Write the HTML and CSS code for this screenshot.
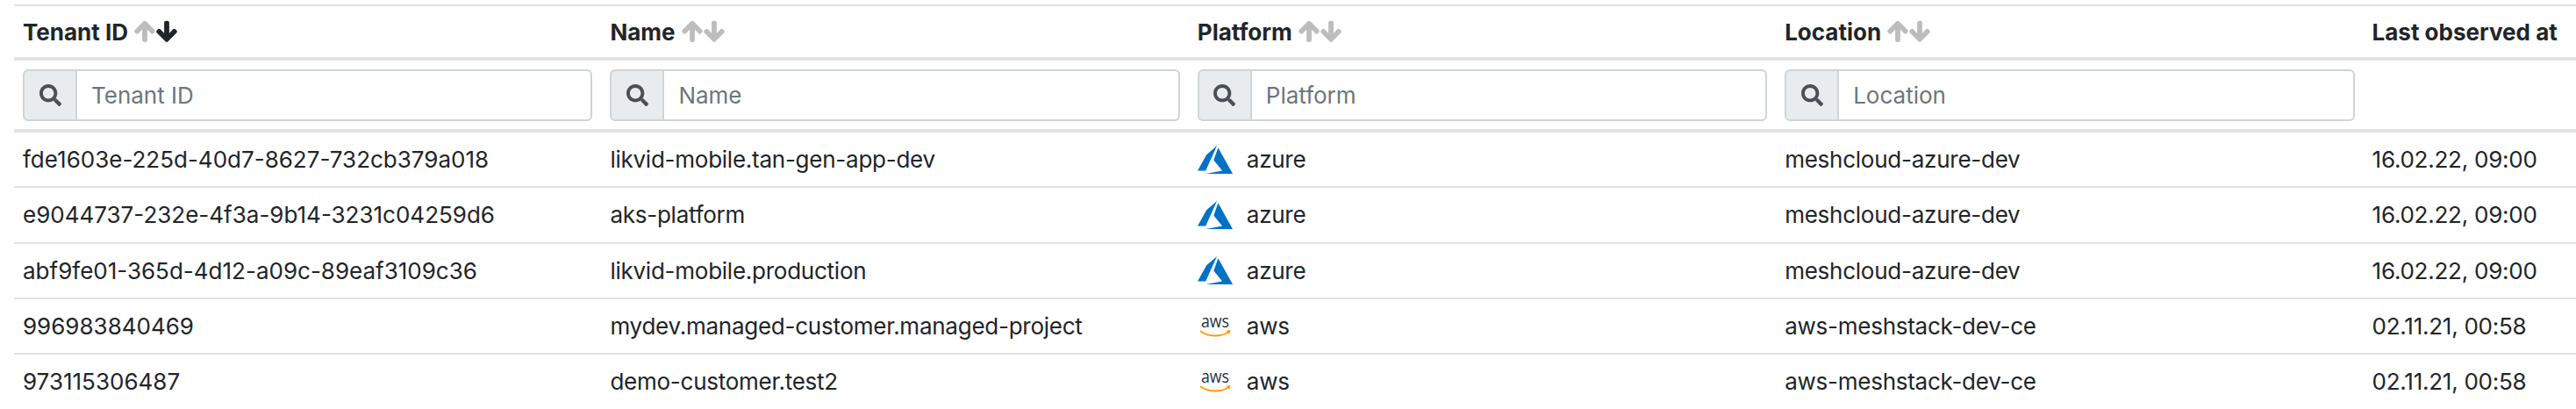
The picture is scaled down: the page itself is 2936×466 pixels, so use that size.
FILE: index.html
```html
<!DOCTYPE html>
<html lang="en">
<head>
<meta charset="utf-8">
<title>Tenants</title>
<link rel="stylesheet" href="styles.css">
</head>
<body>
<svg class="defs" width="0" height="0" aria-hidden="true">
  <symbol id="up" viewBox="-16 0 480 512"><path d="M34.9 289.5l-22.2-22.2c-9.4-9.4-9.4-24.6 0-33.9L207 39c9.4-9.4 24.6-9.4 33.9 0l194.3 194.3c9.4 9.4 9.4 24.6 0 33.9L413 289.4c-9.5 9.5-25 9.3-34.3-.4L264 168.6V456c0 13.3-10.7 24-24 24h-32c-13.3 0-24-10.7-24-24V168.6L69.2 289.1c-9.3 9.8-24.8 10-34.3.4z"/></symbol>
  <symbol id="down" viewBox="-16 0 480 512"><path d="M413.1 222.5l22.2 22.2c9.4 9.4 9.4 24.6 0 33.9L241 473c-9.4 9.4-24.6 9.4-33.9 0L12.7 278.6c-9.4-9.4-9.4-24.6 0-33.9l22.2-22.2c9.5-9.5 25-9.3 34.3.4L184 343.4V56c0-13.3 10.7-24 24-24h32c13.3 0 24 10.7 24 24v287.4l114.8-120.5c9.3-9.8 24.8-10 34.3-.4z"/></symbol>
  <symbol id="search" viewBox="0 0 512 512"><path d="M505 442.7L405.3 343c-4.5-4.5-10.6-7-17-7H372c27.6-35.3 44-79.7 44-128C416 93.1 322.9 0 208 0S0 93.1 0 208s93.1 208 208 208c48.3 0 92.7-16.4 128-44v16.3c0 6.4 2.5 12.5 7 17l99.7 99.7c9.4 9.4 24.6 9.4 33.9 0l28.3-28.3c9.4-9.4 9.4-24.6.1-34zM208 336c-70.7 0-128-57.2-128-128 0-70.7 57.2-128 128-128 70.7 0 128 57.2 128 128 0 70.7-57.2 128-128 128z"/></symbol>
  <symbol id="azure" viewBox="0 2.7 24 18.6" preserveAspectRatio="none"><path fill="#0072c6" d="M5.483 21.3H24L14.025 4.013l-3.038 8.347 5.836 6.938L5.483 21.3zM13.23 2.7L6.105 8.677 0 19.253h5.505v.014L13.23 2.7z"/></symbol>
</svg>
<main class="page">
<table class="tenants">
  <thead>
    <tr class="head">
      <th><span class="th-in"><span class="label">Tenant ID</span><svg class="sort off"><use href="#up"/></svg><svg class="sort"><use href="#down"/></svg></span></th>
      <th><span class="th-in"><span class="label">Name</span><svg class="sort off"><use href="#up"/></svg><svg class="sort off"><use href="#down"/></svg></span></th>
      <th><span class="th-in"><span class="label">Platform</span><svg class="sort off"><use href="#up"/></svg><svg class="sort off"><use href="#down"/></svg></span></th>
      <th><span class="th-in"><span class="label">Location</span><svg class="sort off"><use href="#up"/></svg><svg class="sort off"><use href="#down"/></svg></span></th>
      <th>Last observed at</th>
    </tr>
    <tr class="filters">
      <th><div class="group"><span class="addon"><svg class="mag"><use href="#search"/></svg></span><input placeholder="Tenant ID"></div></th>
      <th><div class="group"><span class="addon"><svg class="mag"><use href="#search"/></svg></span><input placeholder="Name"></div></th>
      <th><div class="group"><span class="addon"><svg class="mag"><use href="#search"/></svg></span><input placeholder="Platform"></div></th>
      <th><div class="group"><span class="addon"><svg class="mag"><use href="#search"/></svg></span><input placeholder="Location"></div></th>
      <th></th>
    </tr>
  </thead>
  <tbody>
    <tr>
      <td>fde1603e-225d-40d7-8627-732cb379a018</td>
      <td>likvid-mobile.tan-gen-app-dev</td>
      <td><span class="plat"><svg class="logo"><use href="#azure"/></svg>azure</span></td>
      <td>meshcloud-azure-dev</td>
      <td>16.02.22, 09:00</td>
    </tr>
    <tr>
      <td>e9044737-232e-4f3a-9b14-3231c04259d6</td>
      <td>aks-platform</td>
      <td><span class="plat"><svg class="logo"><use href="#azure"/></svg>azure</span></td>
      <td>meshcloud-azure-dev</td>
      <td>16.02.22, 09:00</td>
    </tr>
    <tr>
      <td>abf9fe01-365d-4d12-a09c-89eaf3109c36</td>
      <td>likvid-mobile.production</td>
      <td><span class="plat"><svg class="logo"><use href="#azure"/></svg>azure</span></td>
      <td>meshcloud-azure-dev</td>
      <td>16.02.22, 09:00</td>
    </tr>
    <tr>
      <td>996983840469</td>
      <td>mydev.managed-customer.managed-project</td>
      <td><span class="plat"><svg class="logo-aws" viewBox="0 0 40 40"><text class="aws-word" x="20" y="21" textLength="32" lengthAdjust="spacingAndGlyphs" text-anchor="middle">aws</text><path class="aws-smile" d="M3.500 25.500c9 6.500 23 6.500 31.500 1"/><path class="aws-tip" d="M32.500 24.800l5-.8-1.400 4.800z"/></svg>aws</span></td>
      <td>aws-meshstack-dev-ce</td>
      <td>02.11.21, 00:58</td>
    </tr>
    <tr>
      <td>973115306487</td>
      <td>demo-customer.test2</td>
      <td><span class="plat"><svg class="logo-aws" viewBox="0 0 40 40"><text class="aws-word" x="20" y="21" textLength="32" lengthAdjust="spacingAndGlyphs" text-anchor="middle">aws</text><path class="aws-smile" d="M3.500 25.500c9 6.500 23 6.500 31.500 1"/><path class="aws-tip" d="M32.500 24.800l5-.8-1.400 4.800z"/></svg>aws</span></td>
      <td>aws-meshstack-dev-ce</td>
      <td>02.11.21, 00:58</td>
    </tr>
  </tbody>
</table>
</main>
</body>
</html>
```
FILE: styles.css
```css
html, body { margin: 0; padding: 0; background: #fff; }
body { height: 466px; overflow: hidden; font-family: Inter, "Liberation Sans", sans-serif; font-size: 26px; color: #212529; }
.defs { position: absolute; }
.page { padding: 5px 0 0 16px; }
.tenants { width: 2920px; table-layout: fixed; border-collapse: separate; border-spacing: 0; border-top: 2px solid #dee2e6; }
th, td { padding: 0 10px; text-align: left; box-sizing: border-box; }
th:nth-child(-n+4), td:nth-child(-n+4) { width: 669.4px; }
.head th { height: 62px; border-bottom: 4px solid #dee2e6; font-weight: 700; vertical-align: middle; white-space: nowrap; }
.th-in { display: inline-flex; align-items: center; }
.label { margin-right: 7px; }
.sort { width: 24px; height: 25.6px; fill: #212529; stroke: #212529; stroke-width: 36; stroke-linejoin: round; margin-right: 1px; }
.sort.off { fill: #bdbdbd; stroke: #bdbdbd; }
.filters th { height: 82px; border-bottom: 4px solid #dee2e6; padding-top: 10px; padding-bottom: 8px; vertical-align: top; font-weight: 400; }
.group { display: flex; height: 59px; box-sizing: border-box; }
.addon { flex: 0 0 62px; box-sizing: border-box; display: flex; align-items: center; justify-content: center; background: #e9ecef; border: 2px solid #ced4da; border-radius: 6px 0 0 6px; }
.mag { width: 25px; height: 25px; fill: #495057; }
input { flex: 1; min-width: 0; box-sizing: border-box; margin-left: -2px; padding: 0 16px; border: 2px solid #ced4da; border-radius: 0 6px 6px 0; font: inherit; color: #495057; background: #fff; outline: 0; }
input::placeholder { color: #6c757d; opacity: 1; }
tbody td { height: 63.33px; border-bottom: 2px solid #dee2e6; white-space: nowrap; vertical-align: middle; }
tbody td:nth-child(2), tbody td:nth-child(4), tbody td:nth-child(5) { letter-spacing: -0.25px; }
.plat { display: flex; align-items: center; gap: 16px; letter-spacing: -0.25px; }
.logo { width: 40px; height: 32px; flex: none; }
.logo-aws { width: 40px; height: 40px; flex: none; }
.aws-word { font: 400 20px "Open Sans", sans-serif; fill: #252f3e; letter-spacing: 0; }
.aws-smile { fill: none; stroke: #f90; stroke-width: 1.8; stroke-linecap: round; }
.aws-tip { fill: #f90; }
```
